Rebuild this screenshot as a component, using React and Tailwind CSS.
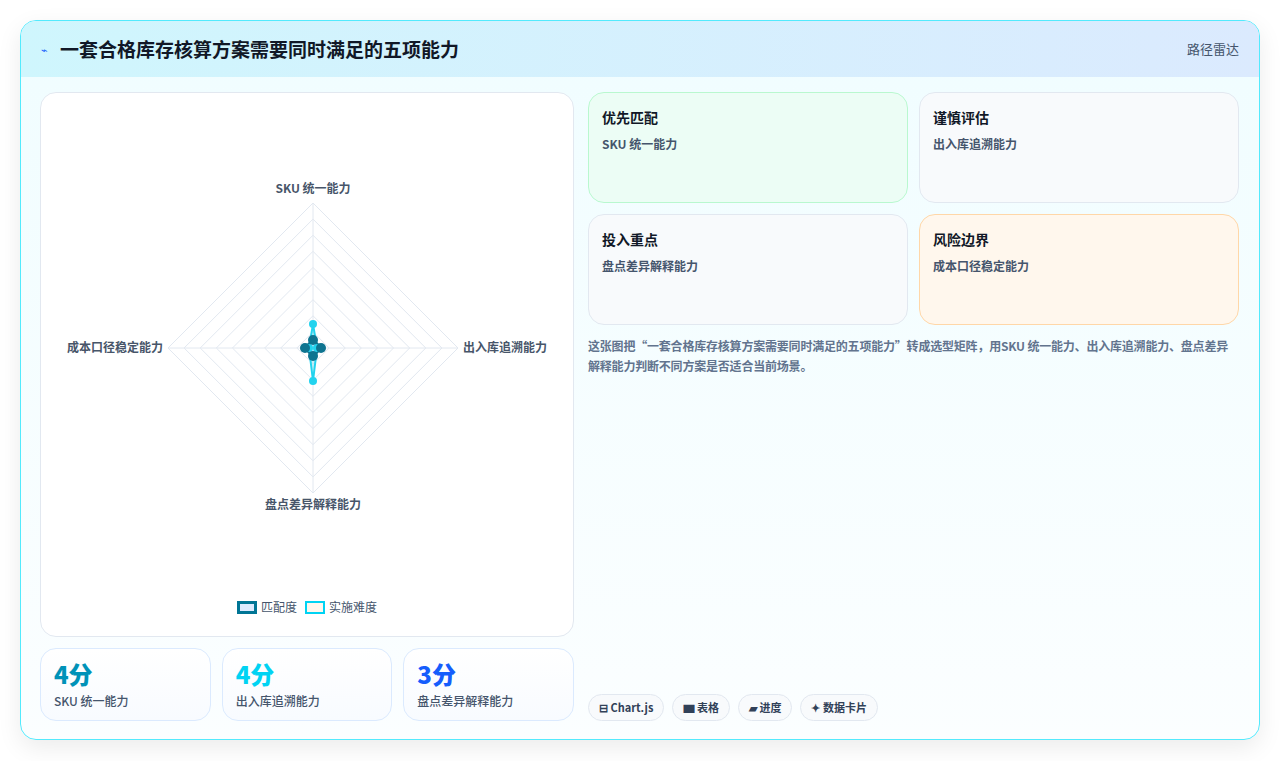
export default function App() {
  const cx = 272, cy = 255, R = 145;
  const rings = [];
  for (let i = 1; i <= 9; i++) {
    const r = (R * i) / 9;
    rings.push(`${cx},${cy - r} ${cx + r},${cy} ${cx},${cy + r} ${cx - r},${cy}`);
  }
  const f = { fontFamily: '"Noto Sans CJK SC", "Noto Sans", sans-serif' };
  return (
    <div className="w-[1280px] h-[761px] bg-white pt-5 px-5" style={f}>
      <div className="w-[1240px] h-[720px] rounded-2xl border border-cyan-300 overflow-hidden bg-gradient-to-b from-[#f0fdff] to-[#fbfeff] shadow-[0_8px_24px_rgba(0,0,0,0.08)] flex flex-col">
        <div className="h-[56px] flex items-center justify-between px-5 bg-gradient-to-r from-[#cff6fd] to-[#dbeafe] shrink-0">
          <div className="flex items-center gap-3">
            <span className="text-[11px] text-blue-600">⌁</span>
            <span className="text-[19px] font-bold text-[#111827]">一套合格库存核算方案需要同时满足的五项能力</span>
          </div>
          <span className="text-[13px] text-slate-600">路径雷达</span>
        </div>
        <div className="flex-1 flex gap-[14px] pl-[19px] pr-5 pt-[15px] pb-[18px]">
          <div className="w-[534px] flex flex-col gap-[11px]">
            <div className="h-[545px] rounded-2xl border border-slate-200 bg-white relative">
              <svg width="532" height="500" className="absolute left-0 top-0">
                {rings.map((p, i) => (
                  <polygon key={i} points={p} fill="none" stroke="#e2e8f0" strokeWidth="1" />
                ))}
                <line x1={cx} y1={cy - R} x2={cx} y2={cy + R} stroke="#e2e8f0" />
                <line x1={cx - R} y1={cy} x2={cx + R} y2={cy} stroke="#e2e8f0" />
                <polygon points={`${cx},${cy - 24} ${cx + 4},${cy} ${cx},${cy + 33} ${cx - 4},${cy}`} fill="rgba(34,211,238,0.2)" stroke="#22d3ee" strokeWidth="2" />
                <polygon points={`${cx},${cy - 8} ${cx + 8},${cy} ${cx},${cy + 8} ${cx - 8},${cy}`} fill="rgba(191,219,254,0.6)" stroke="#0e7490" strokeWidth="3" />
                {[[0, -24], [0, 33], [4, 0], [-4, 0]].map(([x, y], i) => (
                  <circle key={i} cx={cx + x} cy={cy + y} r="4" fill="#22d3ee" />
                ))}
                {[[0, -8], [0, 8], [8, 0], [-8, 0]].map(([x, y], i) => (
                  <circle key={i} cx={cx + x} cy={cy + y} r="5" fill="#0e7490" />
                ))}
                <g fontSize="12" fontWeight="700" fill="#475569" style={f}>
                  <text x={cx} y={cy - 155} textAnchor="middle">SKU 统一能力</text>
                  <text x={cx} y={cy + 161} textAnchor="middle">盘点差异解释能力</text>
                  <text x={cx - 150} y={cy + 4} textAnchor="end">成本口径稳定能力</text>
                  <text x={cx + 150} y={cy + 4} textAnchor="start">出入库追溯能力</text>
                </g>
              </svg>
              <div className="absolute left-0 right-0 top-[505px] flex justify-center gap-2 text-[12px] text-slate-600">
                <span className="flex items-center gap-1"><span className="w-[20px] h-[13px] bg-blue-100 border-[3px] border-cyan-700" />匹配度</span>
                <span className="flex items-center gap-1"><span className="w-[20px] h-[13px] bg-orange-50 border-[2px] border-cyan-400" />实施难度</span>
              </div>
            </div>
            <div className="flex gap-[11px]">
              {[["4分", "text-cyan-600", "SKU 统一能力"], ["4分", "text-cyan-400", "出入库追溯能力"], ["3分", "text-blue-600", "盘点差异解释能力"]].map(([v, c, l]) => (
                <div key={l} className="flex-1 h-[73px] rounded-2xl border border-blue-100 bg-gradient-to-b from-white to-[#f8fbff] px-[13px] pt-[9px]">
                  <div className={`text-[24px] font-extrabold leading-[32px] ${c}`}>{v}</div>
                  <div className="text-[12px] font-medium text-slate-600 mt-[2px]">{l}</div>
                </div>
              ))}
            </div>
          </div>
          <div className="flex-1 flex flex-col">
            <div className="grid grid-cols-2 gap-[11px]">
              {[["优先匹配", "SKU 统一能力", "bg-[#ecfdf5] border-green-200"], ["谨慎评估", "出入库追溯能力", "bg-slate-50 border-slate-200"], ["投入重点", "盘点差异解释能力", "bg-slate-50 border-slate-200"], ["风险边界", "成本口径稳定能力", "bg-[#fff7ed] border-orange-200"]].map(([t, s, c]) => (
                <div key={t} className={`h-[111px] rounded-2xl border px-[13px] pt-[14px] ${c}`}>
                  <div className="text-[14px] font-bold text-[#111827]">{t}</div>
                  <div className="text-[12px] font-semibold text-slate-600 mt-[7px]">{s}</div>
                </div>
              ))}
            </div>
            <p className="mt-[11px] text-[12px] font-semibold leading-[20px] text-slate-500 tracking-[-0.2px]">
              这张图把“一套合格库存核算方案需要同时满足的五项能力”转成选型矩阵，用SKU 统一能力、出入库追溯能力、盘点差异解释能力判断不同方案是否适合当前场景。
            </p>
            <div className="mt-auto flex gap-2 text-[11px] font-bold text-slate-700">
              {["⊟ Chart.js", "▆ 表格", "▰ 进度", "✦ 数据卡片"].map((t) => (
                <span key={t} className="h-[27px] px-[10px] flex items-center rounded-full border border-slate-200 bg-slate-50">{t}</span>
              ))}
            </div>
          </div>
        </div>
      </div>
    </div>
  );
}
